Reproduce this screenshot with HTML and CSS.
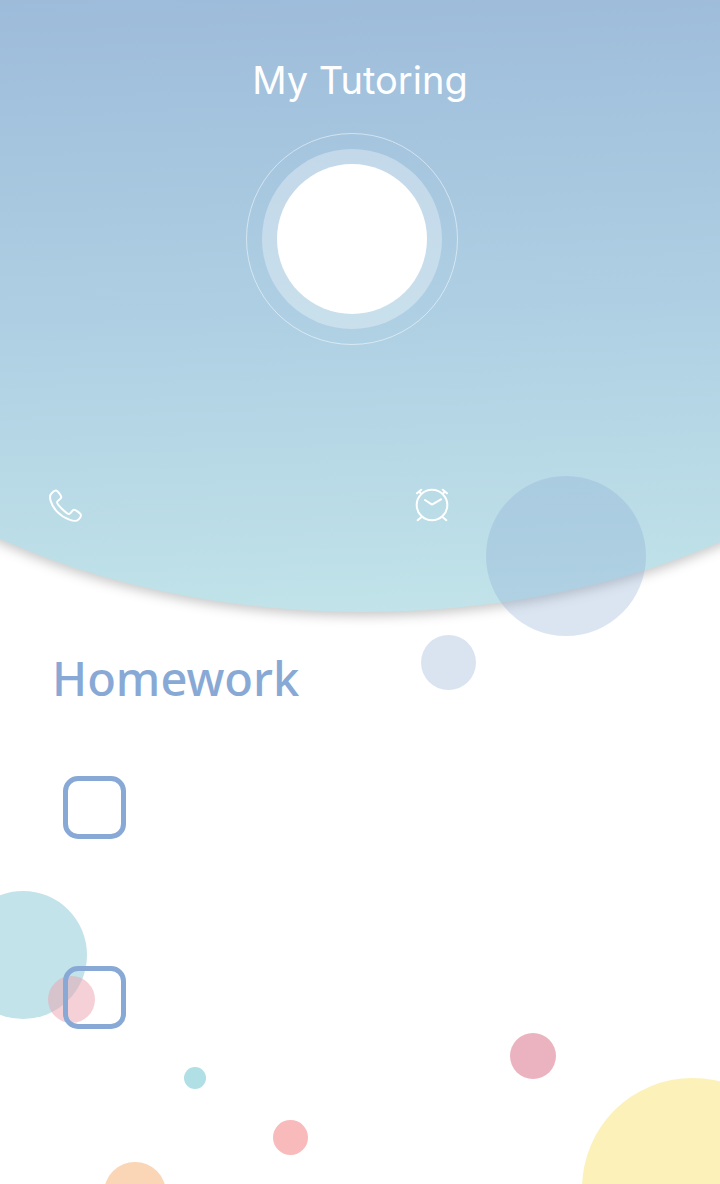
FILE: index.html
```html
<!DOCTYPE html>
<html lang="en">
<head>
<meta charset="utf-8">
<meta name="viewport" content="width=device-width, initial-scale=1">
<title>My Tutoring</title>
<link rel="stylesheet" href="styles.css">
</head>
<body>
<div class="page">
  <header class="hero">
    <h1 class="hero-title">My Tutoring</h1>
    <div class="avatar"><div class="avatar-halo"><div class="avatar-face"></div></div></div>
    <div class="actions">
      <button class="action" type="button" aria-label="Call">
        <svg class="icon" viewBox="0 0 36 36" aria-hidden="true"><path d="M3.600 5.200C5.200 3.500 7 2.200 8.300 2.500c1.300.3 4.600 4.600 5 6.600.3 1.600-3.700 3.200-4.200 4.900-.6 2 9.900 12.600 12.300 11.900 1.800-.5 3.100-4.400 4.700-4.200 2.100.3 6.400 3.800 6.800 5.100.4 1.400-.9 3.200-2.500 4.800-2 2-5.200 1.500-9 0C11.900 28.200 4.800 20.600 2.600 12.800c-.9-3.300-.7-6 1-7.600Z"/></svg>
      </button>
      <button class="action" type="button" aria-label="Alarm">
        <svg class="icon" viewBox="0 0 36 36" aria-hidden="true"><circle cx="18" cy="17" r="15.300"/><path d="M11 12l7 4.600 9-5.300M7.500 29L3.700 32.300M28.500 29l3.800 3.300M3 5.300L7.200 1.700M5 3.500l2 2M33 5.300L28.800 1.700M31 3.500l-2 2"/></svg>
      </button>
    </div>
  </header>
  <main class="homework">
    <h2 class="homework-title">Homework</h2>
    <ul class="tasks">
      <li class="task"><input class="task-check" type="checkbox" aria-label="Task 1"></li>
      <li class="task"><input class="task-check" type="checkbox" aria-label="Task 2"></li>
    </ul>
  </main>
  <div class="bubbles" aria-hidden="true">
    <span class="bubble bubble-sky"></span>
    <span class="bubble bubble-mist"></span>
    <span class="bubble bubble-aqua"></span>
    <span class="bubble bubble-blush"></span>
    <span class="bubble bubble-teal"></span>
    <span class="bubble bubble-coral"></span>
    <span class="bubble bubble-rose"></span>
    <span class="bubble bubble-peach"></span>
    <span class="bubble bubble-lemon"></span>
  </div>
</div>
</body>
</html>
```
FILE: styles.css
```css
* { box-sizing: border-box; }

body {
  margin: 0;
  background: #fff;
  font-family: Inter, "Open Sans", sans-serif;
}

.page {
  position: relative;
  isolation: isolate;
  min-height: 100vh;
  overflow: hidden;
}

.hero {
  position: relative;
  display: flex;
  flex-direction: column;
  align-items: center;
  padding: 56px 48px 88px;
  color: #fff;
}

/* Wide ellipse that gives the header its curved lower edge */
.hero::before {
  content: "";
  position: absolute;
  z-index: -2;
  top: 0;
  bottom: 0;
  left: -33%;
  width: 167%;
  border-radius: 0 0 50% 50% / 0 0 360px 360px;
  background: linear-gradient(178deg, #9dbbda 0%, #aecfe3 50%, #c2e4e9 100%);
  filter: drop-shadow(0 4px 6px rgba(0, 0, 0, 0.22));
}

.hero-title {
  margin: 0;
  font-size: 38px;
  line-height: 48px;
  font-weight: 400;
}

.avatar {
  margin-top: 29px;
  margin-right: 16px;
  padding: 15px;
  border: 1px solid rgba(255, 255, 255, 0.5);
  border-radius: 50%;
}

.avatar-halo {
  padding: 15px;
  border-radius: 50%;
  background: rgba(255, 255, 255, 0.33);
}

.avatar-face {
  width: 150px;
  height: 150px;
  border-radius: 50%;
  background: #fff;
}

.actions {
  display: grid;
  grid-template-columns: 366px 1fr;
  align-self: stretch;
  margin-top: 143px;
}

.action {
  width: 36px;
  height: 36px;
  padding: 0;
  border: 0;
  background: none;
  color: inherit;
}

.icon {
  display: block;
  width: 36px;
  height: 36px;
  fill: none;
  stroke: currentColor;
  stroke-width: 2;
  stroke-linecap: round;
  stroke-linejoin: round;
}

.homework {
  padding: 36px 52px;
}

.homework-title {
  margin: 0;
  color: #88a9d5;
  font-family: "Noto Sans", sans-serif;
  font-size: 47px;
  line-height: 60px;
  font-weight: 500;
}

.tasks {
  display: grid;
  gap: 127px;
  margin: 68px 0 0;
  padding: 0 11px;
  list-style: none;
}

.task { display: flex; }

.task-check {
  appearance: none;
  width: 63px;
  height: 63px;
  margin: 0;
  border: 5px solid #88a9d5;
  border-radius: 15px;
}

.task-check:checked { background: #88a9d5; }

.bubbles {
  position: absolute;
  inset: 0;
  z-index: -1;
  pointer-events: none;
}

.bubble {
  position: absolute;
  border-radius: 50%;
  aspect-ratio: 1;
}

.bubble-sky { left: 486px; top: 476px; width: 160px; background: rgba(136, 169, 213, 0.3); }
.bubble-mist { left: 421px; top: 635px; width: 55px; background: #dae4f1; }
.bubble-aqua { left: -41px; top: 891px; width: 128px; background: #c2e3e9; }
.bubble-blush { left: 48px; top: 976px; width: 47px; background: rgba(236, 164, 176, 0.5); }
.bubble-teal { left: 184px; top: 1067px; width: 22px; background: #b0dfe5; }
.bubble-coral { left: 273px; top: 1120px; width: 35px; background: #f9babb; }
.bubble-rose { left: 510px; top: 1033px; width: 46px; background: #ebb3c0; }
.bubble-peach { left: 104px; top: 1162px; width: 62px; background: #fad6b7; }
.bubble-lemon { left: 582px; top: 1078px; width: 221px; background: #fcf2b9; }
```
